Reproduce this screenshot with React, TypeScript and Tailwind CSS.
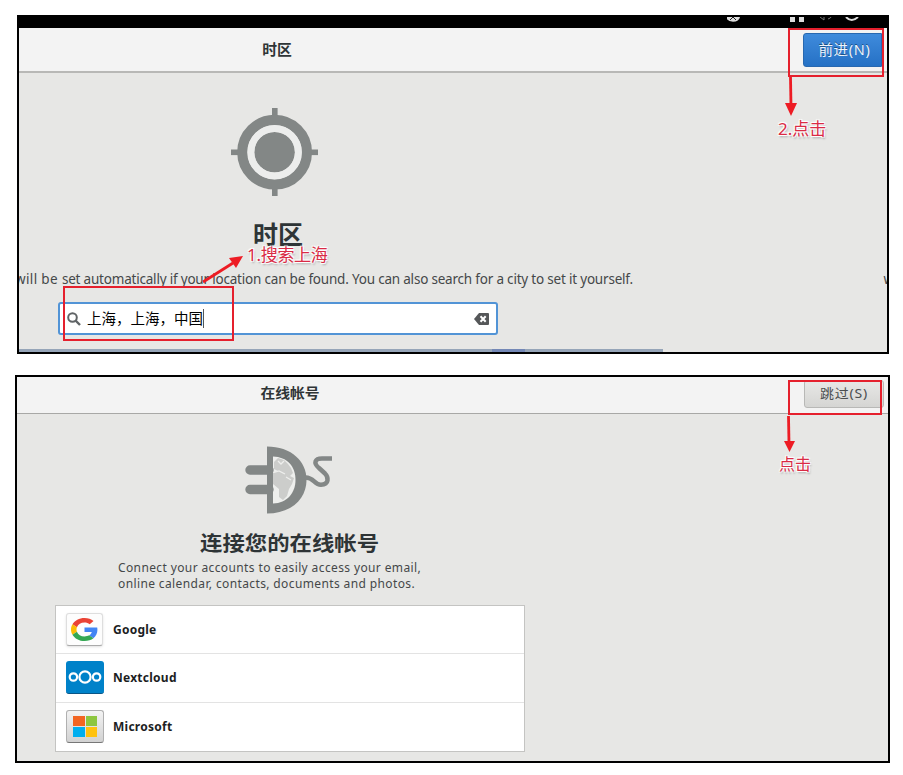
import React from "react";

const cjk = "font-['Noto_Sans','Noto_Sans_CJK_SC',sans-serif]";

function TargetIcon() {
  return (
    <svg width="87" height="88" viewBox="0 0 87 88" className="block">
      <g fill="#838786">
        <rect x="41" y="0" width="5.6" height="9" />
        <rect x="41" y="79" width="5.6" height="9" />
        <rect x="0" y="41.5" width="9" height="5.6" />
        <rect x="78" y="41.5" width="9" height="5.6" />
        <circle cx="43.6" cy="44.2" r="20.3" />
      </g>
      <circle cx="43.6" cy="44.2" r="32.2" fill="none" stroke="#838786" strokeWidth="10.4" />
      <circle cx="43.6" cy="44.2" r="23.8" fill="none" stroke="#ecedec" strokeWidth="7" />
    </svg>
  );
}

function PlugIcon() {
  return (
    <svg width="88" height="68" viewBox="0 0 88 68" className="block">
      <path d="M22 0.5 C46 0.5 61.500 15 61.500 34 C61.500 53 46 67.500 22 67.500Z" fill="#838786" />
      <path d="M28 10.5 C42 11 50.500 20 50.500 34 C50.500 47 42 57 28 57.500Z" fill="#eeefed" />
      <path d="M29 16 L33 12 L39 14 L43 18 L46 22 L48 27 L45 30 L49 32 L47 38 L44 43 L42 50 L38 54 L34 51 L34 43 L28 38 V27 L33 25 L29 23Z" fill="#cccdcb" />
      <path d="M33 15 L36 18 L39 15 M29 26.500 L34 25 L40 28 M41 31 L46 34" stroke="#eeefed" strokeWidth="1.300" fill="none" />
      <path d="M5 24 H24 M5 43.500 H24" stroke="#838786" strokeWidth="9.400" strokeLinecap="round" />
      <path d="M60 31.500 C69 31 69 39 76 38.800 C84.500 38.500 83.500 31 80 27.500 L74 22 C68 17 70 12.500 77 12.500 L87 12.500" fill="none" stroke="#838786" strokeWidth="4.500" />
    </svg>
  );
}

function Arrow({ d, head, className }: { d: string; head: string; className: string }) {
  return (
    <svg className={`absolute overflow-visible ${className}`} width="40" height="40" viewBox="0 0 40 40">
      <path d={d} stroke="#ed1c24" strokeWidth="2.8" fill="none" />
      <path d={head} fill="#ed1c24" />
    </svg>
  );
}

function Note({ children, className }: { children: React.ReactNode; className: string }) {
  return (
    <div
      className={`absolute whitespace-nowrap leading-5 text-[#d92b45] [text-shadow:1px_1px_1px_#fff,-1px_-1px_1px_#fff,1px_-1px_1px_#fff,-1px_1px_1px_#fff,1px_2px_2px_#999] ${className}`}
    >
      {children}
    </div>
  );
}

function TimezonePanel() {
  return (
    <section className="relative ml-[17px] mt-[15px] h-[339px] w-[872px] border-2 border-black bg-[#e7e7e5]">
      <div className="flex h-full flex-col overflow-hidden">
        <div className="flex h-[11px] shrink-0 justify-end bg-black">
          <svg width="160" height="6" viewBox="0 0 160 6">
            <path d="M-1 0 Q0 4.500 6 4.800 Q12 4.500 13 0" fill="#ddd" />
            <path d="M3 3 L6 0 L9 3" stroke="#222" fill="none" />
            <path d="M63 0h5v5h-5z M72 0h5v5h-5z" fill="#ddd" />
            <path d="M93 0 L97 3 V0 M101 2 Q104 1 104 0" stroke="#777" fill="none" />
            <path d="M119 0 Q124.500 6 131 0" stroke="#ddd" strokeWidth="2" fill="none" />
          </svg>
        </div>
        <header className="flex h-[45px] shrink-0 items-center justify-between border-b-2 border-[#b8b8b6] bg-[#f3f3f3]">
          <h2 className="w-[516px] pb-px text-center text-[14.8px] font-bold text-[#2e3436]">时区</h2>
          <button className="mr-[5px] h-[34px] w-[79px] rounded-l-[3px] border border-[#2868b0] bg-linear-to-b from-[#3f8bdc] to-[#2571c5] pl-1 text-[14.500px] tracking-[0.7px] text-[#eef5fc] [text-shadow:0_-1px_#1c5187]">
            前进(N)
          </button>
        </header>
        <div className="flex w-[511px] shrink-0 flex-col items-center pt-[35px]">
          <TargetIcon />
          <h1 className="mt-[21px] pl-[7px] text-[25px] font-bold leading-[34px] text-[#2e3436]">时区</h1>
        </div>
        <div className="-ml-[4px] mt-[18px] flex shrink-0 justify-between whitespace-nowrap text-[13.5px] leading-5 text-[#454849]">
          <p className="tracking-[-0.2px]">
            <span className="tracking-[0.36px]">will be </span>
            set automatically if your location can be found. You can also search for a city to set it yourself.
          </p>
          <span className="-mr-[7px]">w</span>
        </div>
        <div className="ml-[39px] mt-[13px] flex h-[33px] w-[440px] shrink-0 items-center rounded-[3px] border-2 border-[#5294d6] bg-white pl-[7px] pr-[7px]">
          <svg width="14" height="14" viewBox="0 0 14 14">
            <circle cx="5.500" cy="5.500" r="4.300" fill="none" stroke="#606466" strokeWidth="2" />
            <path d="M8.500 8.500 L13 13" stroke="#606466" strokeWidth="2.400" />
          </svg>
          <span className="ml-[6px] text-[14.5px] text-black">上海，上海，中国</span>
          <i className="h-[19px] w-px bg-[#555]" />
          <svg className="ml-auto" width="15" height="12" viewBox="0 0 15 12">
            <path d="M0 6 L5 0 H14 Q15 0 15 1 V11 Q15 12 14 12 H5Z" fill="#555759" />
            <path d="M6.500 3.300 L11.700 8.700 M11.700 3.300 L6.500 8.700" stroke="white" strokeWidth="2" />
          </svg>
        </div>
        <div className="mt-auto flex h-[3px] w-[644px] shrink-0 bg-[#96a5b8]">
          <div className="ml-[473px] w-[33px] bg-[#7488b6]" />
        </div>
      </div>
      <div className="absolute left-[769px] top-[11px] h-[49px] w-[96px] border-2 border-[#e5202d]" />
      <Arrow className="left-[751px] top-[58px]" d="M20.500 2 L21 32" head="M15 28 H27 L21 41Z" />
      <Note className="left-[759px] top-[102px] text-[17px]">2.点击</Note>
      <div className="absolute left-[44px] top-[269px] h-[55px] w-[171px] border-2 border-[#e5202d]" />
      <Arrow className="left-[184px] top-[239px]" d="M0 26 L30 7" head="M40 0 L33 12 L26 2Z" />
      <Note className="left-[228px] top-[228px] text-[17px] tracking-[-0.3px]">1.搜索上海</Note>
    </section>
  );
}

function GoogleLogo() {
  return (
    <span className="flex h-[33px] w-[37px] items-center justify-center rounded-[3px] border border-[#dedede] border-b-[#aaa] bg-[#fdfdfd] shadow-sm">
      <svg width="27" height="23" viewBox="0 0 48 48" preserveAspectRatio="none">
        <path fill="#EA4335" d="M24 9.500c3.540 0 6.710 1.220 9.210 3.600l6.850-6.850C35.900 2.380 30.470 0 24 0 14.620 0 6.510 5.380 2.560 13.220l7.980 6.190C12.430 13.720 17.740 9.500 24 9.500z" />
        <path fill="#4285F4" d="M46.980 24.550c0-1.570-.150-3.090-.380-4.550H24v9.020h12.940c-.580 2.960-2.260 5.480-4.780 7.180l7.730 6c4.510-4.180 7.090-10.360 7.090-17.650z" />
        <path fill="#FBBC05" d="M10.530 28.590c-.480-1.450-.760-2.990-.760-4.590s.270-3.140.760-4.590l-7.980-6.190C.920 16.460 0 20.120 0 24s.920 7.540 2.560 10.780l7.970-6.190z" />
        <path fill="#34A853" d="M24 48c6.480 0 11.930-2.130 15.890-5.810l-7.730-6c-2.150 1.450-4.920 2.300-8.160 2.300-6.260 0-11.570-4.220-13.470-9.910l-7.980 6.190C6.510 42.620 14.620 48 24 48z" />
      </svg>
    </span>
  );
}

function NextcloudLogo() {
  return (
    <span className="flex h-[33px] w-[38px] items-center justify-center rounded-[3px] border-b border-[#0a5586] bg-[#0082c9]">
      <svg width="34" height="14" viewBox="0 0 34 14" fill="none" stroke="white" strokeWidth="2.200">
        <circle cx="17" cy="7" r="5.600" />
        <circle cx="5.400" cy="7" r="3.700" />
        <circle cx="28.600" cy="7" r="3.700" />
      </svg>
    </span>
  );
}

function MicrosoftLogo() {
  return (
    <span className="flex h-[33px] w-[38px] items-center justify-center rounded-[3px] border border-[#b0b0b0] border-b-[#777] bg-linear-to-b from-[#f3f3f3] to-[#d2d2d2]">
      <span className="grid h-[21px] w-[24px] grid-cols-2 gap-px">
        <i className="bg-[#f26522]" />
        <i className="bg-[#8dc63f]" />
        <i className="bg-[#00aeef]" />
        <i className="bg-[#ffc20e]" />
      </span>
    </span>
  );
}

const accounts = [
  { name: "Google", logo: <GoogleLogo /> },
  { name: "Nextcloud", logo: <NextcloudLogo /> },
  { name: "Microsoft", logo: <MicrosoftLogo /> },
];

function AccountsPanel() {
  return (
    <section className="relative ml-[15px] mt-[21px] h-[388px] w-[875px] border-2 border-black bg-[#e7e7e5]">
      <header className="flex h-[37px] items-start justify-between border-b border-[#a8a8a6] bg-[#f3f3f3]">
        <h2 className="w-[546px] pt-[5px] text-center text-[14.800px] font-bold leading-[22px] text-[#2e3436]">
          <span className="inline-block scale-y-90">在线帐号</span>
        </h2>
        <button className="mr-[4px] mt-[3px] h-[28px] w-[80px] rounded-[3px] border border-[#b8b8b6] bg-linear-to-b from-[#e8e8e6] to-[#d5d5d3] text-[14px] tracking-[0.8px] text-[#4b4e4f]">
          <span className="inline-block -translate-y-px scale-y-90">跳过(S)</span>
        </button>
      </header>
      <div className="pl-[228px] pt-[32px]">
        <PlugIcon />
      </div>
      <h1 className="ml-[183px] mt-[17px] w-[190px] origin-left scale-y-90 whitespace-nowrap text-[22.400px] font-bold leading-[26px] text-[#2e3436]">
        连接您的在线帐号
      </h1>
      <p className="ml-[101px] mt-[3px] whitespace-nowrap text-[12px] leading-4 tracking-[0.38px] text-[#454849]">
        Connect your accounts to easily access your email,
        <br />
        online calendar, contacts, documents and photos.
      </p>
      <ul className="ml-[38px] mt-[13px] w-[470px] divide-y divide-[#e3e3e3] border border-[#c4c4c2] bg-white">
        {accounts.map((a) => (
          <li key={a.name} className="flex h-[48.3px] items-center pl-[10px]">
            <span className="w-[47px]">{a.logo}</span>
            <span className="text-[12px] font-bold tracking-[0.25px] text-[#1c1e1f]">{a.name}</span>
          </li>
        ))}
      </ul>
      <div className="absolute left-[771px] top-[3px] h-[35px] w-[94px] border-2 border-[#e5202d]" />
      <Arrow className="left-[752px] top-[37px]" d="M19.500 2 L20 30" head="M15 27 H26 L20.500 38Z" />
      <Note className="left-[762px] top-[77px] text-[16px]">点击</Note>
    </section>
  );
}

export default function App() {
  return (
    <main className={`flow-root h-[775px] w-[903px] overflow-hidden bg-white ${cjk}`}>
      <TimezonePanel />
      <AccountsPanel />
    </main>
  );
}
